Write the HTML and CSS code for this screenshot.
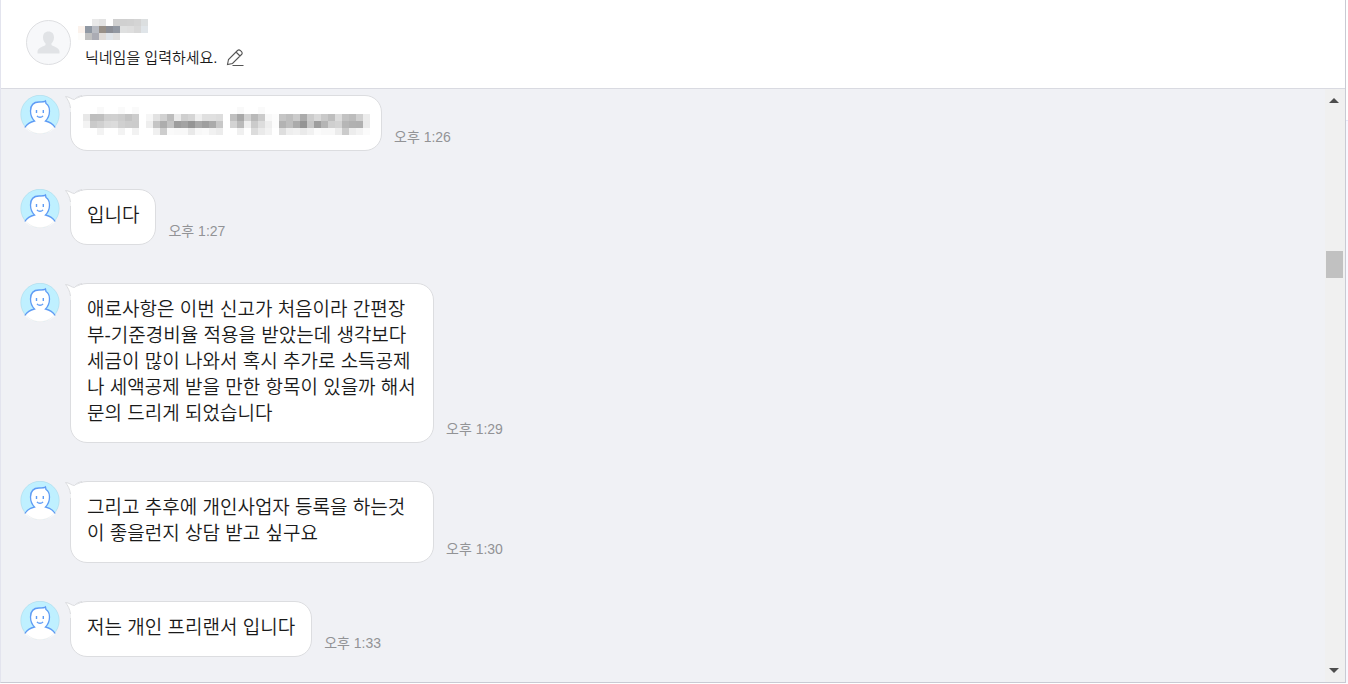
FILE: index.html
```html
<!DOCTYPE html>
<html lang="ko">
<head>
    <meta charset="UTF-8">
    <meta name="viewport" content="width=device-width, initial-scale=1">
    <title>채팅</title>
    <link rel="stylesheet" href="styles.css">
</head>
<body>

<!-- 공통 아이콘 -->
<svg class="defs" aria-hidden="true">
    <symbol id="face" viewBox="0 0 40 40">
        <circle cx="20" cy="19.5" r="19.5" fill="#bff0ff"/>
        <path d="M4.5 32.5C7 29 10 27 14.500 26C11.500 23 10.500 19.500 10.500 16C10.500 10 14 7 19 7C22 7 24.500 7 25.500 6L26 8.500C28.500 10 29.500 12.500 29.500 16C29.500 19.500 28.500 23 25.500 26C30 27 33 29 35.500 32.500C31.500 36.800 26 39 20 39S8.500 36.800 4.500 32.500Z" fill="#fff"/>
        <path d="M4.800 32.500C7 29 10 27 14.500 26C11.500 23 10.500 19.500 10.500 16C10.500 10 14 7 19 7C22 7 24.500 7 25.500 6L26 8.500C28.500 10 29.500 12.500 29.500 16C29.500 19.500 28.500 23 25.500 26C30 27 33 29 35.200 32.500" fill="none" stroke="#5f9cf5" stroke-width="1.300"/>
        <path d="M16.500 15v3M23.300 15v3M17 20.800c1.500 2 4.500 2 6 0" fill="none" stroke="#5f9cf5" stroke-width="1.400"/>
        <circle cx="20" cy="19.500" r="19.200" fill="none" stroke="#000" stroke-opacity=".07" stroke-width=".8"/>
    </symbol>
    <symbol id="tail" viewBox="0 0 20 18">
        <path d="M1.500 1.500L10.500 4.500L17 2V17H6.500V13C6 8 3.500 4 1.500 1.500Z" fill="#fff"/>
        <path d="M6.500 13C6 8 3.500 4 1.500 1.500C5 1.500 7.500 4.500 10.500 4.500C12.500 2.500 14 1.500 18 .500" fill="none" stroke="#dcdde0"/>
    </symbol>
</svg>

<div class="chat">
    <header class="chat_header">
        <svg class="profile" viewBox="0 0 45 45" aria-hidden="true">
            <circle cx="22.500" cy="22.500" r="22" fill="#f7f8fa" stroke="#dddee1"/>
            <path d="M22.500 11.500c3.500 0 5.500 2.300 5.500 6c0 2.500-1 4.500-2.500 5.800v1.700c1 1.300 8 2.500 8 6.500v2H11.500v-2c0-4 7-5.200 8-6.500v-1.700c-1.500-1.300-2.500-3.300-2.500-5.800c0-3.700 2-6 5.500-6z" fill="#e1e3e6"/>
        </svg>
        <div class="user">
            <svg class="mosaic" data-mosaic="name" aria-hidden="true"></svg>
            <button class="nickname" type="button">
                <span>닉네임을 입력하세요.</span>
                <svg class="pencil" viewBox="0 0 18 18" aria-hidden="true">
                    <path d="M1.500 15.500L2.500 10.500L11.500 1.500Q13 .300 14.500 1.700L15.500 2.700Q16.800 4.200 15.500 5.500L6.500 14.500Z M10 3l4 4 M6.500 16.500H17.500" fill="none" stroke="#555" stroke-width="1.100"/>
                </svg>
            </button>
        </div>
    </header>

    <div class="chat_body">
        <ul class="messages">
            <li class="message">
                <svg class="avatar" aria-hidden="true"><use href="#face"/></svg>
                <div class="bubble">
                    <svg class="tail" aria-hidden="true"><use href="#tail"/></svg>
                    <svg class="mosaic mosaic_line" data-mosaic="line" aria-hidden="true"></svg>
                </div>
                <time class="time">오후 1:26</time>
            </li>
            <li class="message">
                <svg class="avatar" aria-hidden="true"><use href="#face"/></svg>
                <div class="bubble">
                    <svg class="tail" aria-hidden="true"><use href="#tail"/></svg>
                    <p>입니다</p>
                </div>
                <time class="time">오후 1:27</time>
            </li>
            <li class="message">
                <svg class="avatar" aria-hidden="true"><use href="#face"/></svg>
                <div class="bubble">
                    <svg class="tail" aria-hidden="true"><use href="#tail"/></svg>
                    <p>애로사항은 이번 신고가 처음이라 간편장부-기준경비율 적용을 받았는데 생각보다 세금이 많이 나와서 혹시 추가로 소득공제나 세액공제 받을 만한 항목이 있을까 해서 문의 드리게 되었습니다</p>
                </div>
                <time class="time">오후 1:29</time>
            </li>
            <li class="message">
                <svg class="avatar" aria-hidden="true"><use href="#face"/></svg>
                <div class="bubble">
                    <svg class="tail" aria-hidden="true"><use href="#tail"/></svg>
                    <p>그리고 추후에 개인사업자 등록을 하는것이 좋을런지 상담 받고 싶구요</p>
                </div>
                <time class="time">오후 1:30</time>
            </li>
            <li class="message">
                <svg class="avatar" aria-hidden="true"><use href="#face"/></svg>
                <div class="bubble">
                    <svg class="tail" aria-hidden="true"><use href="#tail"/></svg>
                    <p>저는 개인 프리랜서 입니다</p>
                </div>
                <time class="time">오후 1:33</time>
            </li>
        </ul>

        <div class="scrollbar">
            <button class="arrow" type="button" aria-label="위로">
                <svg viewBox="0 0 10 5"><path d="M0 5L5 0L10 5Z"/></svg>
            </button>
            <div class="track"><span class="thumb"></span></div>
            <button class="arrow" type="button" aria-label="아래로">
                <svg viewBox="0 0 10 5"><path d="M0 0L5 5L10 0Z"/></svg>
            </button>
        </div>
    </div>
</div>
<div class="side"></div>

<script src="script.js"></script>
</body>
</html>
```
FILE: styles.css
```css
* {
    margin: 0;
    padding: 0;
    box-sizing: border-box;
    list-style: none;
}

body {
    display: grid;
    grid-template-columns: 1fr 2px;
    height: 100vh;
    padding-bottom: 1px;
    background-color: #fff;
    color: #1a1a1a;
    font-family: "Liberation Sans", "Noto Sans CJK KR", sans-serif;
    overflow: hidden;
}

button {
    border: none;
    background: none;
    font: inherit;
    color: inherit;
    cursor: pointer;
}

.defs {
    position: absolute;
    width: 0;
    height: 0;
}

.chat {
    display: flex;
    flex-direction: column;
    min-height: 0;
    border: 1px solid #c9cad3;
    border-top: none;
    border-left-color: #e3e4ee;
}

/* 상단 프로필 */
.chat_header {
    display: flex;
    gap: 7px;
    padding: 19px 25px 20px;
    border-bottom: 1px solid #d9dae1;
}

.profile {
    width: 45px;
    height: 45px;
    margin-top: 1px;
}

.mosaic {
    display: block;
}

.nickname {
    display: flex;
    align-items: center;
    gap: 8px;
    margin: 8px 0 0 7px;
    font-size: 15px;
    font-weight: 350;
    line-height: 20px;
}

.pencil {
    width: 18px;
    height: 18px;
}

/* 대화 목록 */
.chat_body {
    display: flex;
    flex: 1;
    min-height: 0;
    background-color: #f0f1f5;
}

.messages {
    display: flex;
    flex: 1;
    flex-direction: column;
    gap: 38px;
    padding: 6px 19px;
    overflow: hidden;
}

.message {
    display: flex;
    align-items: flex-start;
}

.avatar {
    flex: none;
    width: 40px;
    height: 40px;
    margin-right: 10px;
}

.bubble {
    position: relative;
    max-width: 364px;
    padding: 13px 16px 15px;
    border: 1px solid #dcdde0;
    border-radius: 17px;
    background-color: #fff;
    font-size: 19px;
    font-weight: 350;
    line-height: 26px;
    word-break: break-all;
}

.tail {
    position: absolute;
    top: -1px;
    left: -7px;
    width: 20px;
    height: 18px;
}

.mosaic_line {
    margin: -2px -5px 0 -4px;
}

.time {
    align-self: flex-end;
    margin: 0 0 4px 12px;
    color: #929396;
    font-size: 14px;
    line-height: 20px;
}

/* 스크롤바 */
.scrollbar {
    display: flex;
    flex: none;
    flex-direction: column;
    width: 20px;
    padding-right: 2px;
    background-color: #f0f0f0;
}

.arrow {
    display: flex;
    align-items: center;
    justify-content: center;
    height: 23px;
}

.arrow svg {
    width: 10px;
    height: 5px;
    fill: #4d4d4d;
}

.track {
    display: grid;
    flex: 1;
    grid-template-rows: 139fr 27px 381fr;
}

.thumb {
    grid-row: 2;
    margin-left: 1px;
    background-color: #c1c1c1;
}

.side {
    margin-top: 120px;
    border-top: 1px solid #e6e6f8;
    background-color: #f8f8ff;
}
```
FILE: script.js
```js
// 모자이크 데이터: 한 칸 = 7px, '.' 은 빈 칸
const CELL = 7;

const mosaics = {
    name: [
        '. . e9e9e9 e3e3e3 . d0d0d0 d0d0d0 d1d1d1 d4d4d4 dcdfe0',
        'fbf2ec 9098a3 b8bbc2 989088 8b8e96 9298a2 dfe0e0 dedede d8d8d8 e0e5e9',
        'fdfcfa c0c0c0 abacb4 e0dcd9 e0e5ea e0e0e0 . . . .'
    ],
    line: [
        '. . f9 . . fa . fa . . . . . . . . . . . . . . f9 . . fa . . . . . . . . . . . . . . .',
        'e8 be bf cf d0 cc c3 cc . f6 e2 d1 bc ea cf d5 ef e0 e0 dd . c0 a8 d2 b9 cb f8 fc c5 be cb ab cc d9 c9 be dc c2 bc d0 ec',
        'f3 ca d0 da dc d0 cc cb . ee c4 ad c3 9d a3 95 a9 9f ab c8 . d3 ba ef cb dd ee fc b3 be ab 94 c6 9e b5 cf d3 b6 b1 b0 eb',
        '. . f3 . . f3 . f2 . . f0 cd fa f8 f8 e9 f8 fa f1 ec . . f0 . dc ea f2 . de ee f1 ea f1 fb f8 f8 ec cb ed f3 fb'
    ]
};

document.querySelectorAll('[data-mosaic]').forEach(function (svg) {
    const rows = mosaics[svg.dataset.mosaic].map(row => row.split(' '));

    svg.setAttribute('width', rows[0].length * CELL);
    svg.setAttribute('height', rows.length * CELL);

    rows.forEach(function (row, y) {
        row.forEach(function (color, x) {
            if (color === '.') {
                return;
            }
            // 두 자리 값은 회색
            const hex = color.length === 2 ? color.repeat(3) : color;
            const rect = document.createElementNS('http://www.w3.org/2000/svg', 'rect');
            rect.setAttribute('x', x * CELL);
            rect.setAttribute('y', y * CELL);
            rect.setAttribute('width', CELL);
            rect.setAttribute('height', CELL);
            rect.setAttribute('fill', '#' + hex);
            svg.appendChild(rect);
        });
    });
});
```
